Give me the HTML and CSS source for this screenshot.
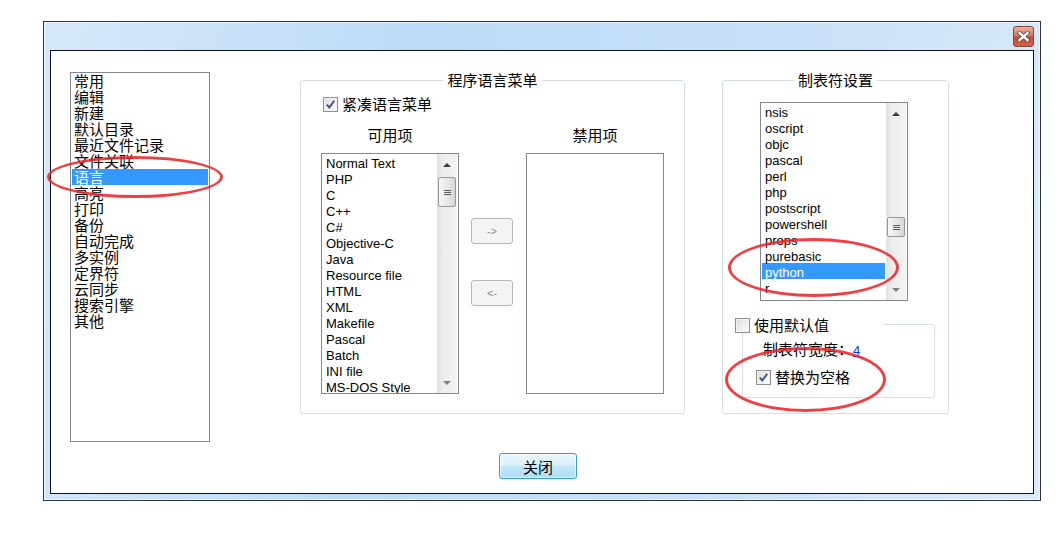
FILE: index.html
```html
<!DOCTYPE html>
<html lang="zh-CN">
<head>
  <meta charset="UTF-8" />
  <title>首选项</title>
  <link rel="stylesheet" href="styles.css">
</head>
<body>
  <div class="page">
    <div class="window">
      <div class="titlebar">
        <span class="close-btn">
          <svg width="13" height="11" viewBox="0 0 13 11">
            <path d="M2.5 2 L10.5 9 M10.5 2 L2.5 9" stroke="#4d4d4d" stroke-width="4.2" stroke-linecap="square" fill="none"/>
            <path d="M2.5 2 L10.5 9 M10.5 2 L2.5 9" stroke="#fff" stroke-width="2.4" stroke-linecap="square" fill="none"/>
          </svg>
        </span>
      </div>
      <div class="client">
        <div class="main">
          <ul class="listbox nav-list">
            <li>常用</li>
            <li>编辑</li>
            <li>新建</li>
            <li>默认目录</li>
            <li>最近文件记录</li>
            <li>文件关联</li>
            <li class="selected">语言</li>
            <li>高亮</li>
            <li>打印</li>
            <li>备份</li>
            <li>自动完成</li>
            <li>多实例</li>
            <li>定界符</li>
            <li>云同步</li>
            <li>搜索引擎</li>
            <li>其他</li>
          </ul>

          <fieldset class="group lang-group">
            <legend>程序语言菜单</legend>
            <label class="check">
              <span class="box"><svg width="11" height="11" viewBox="0 0 11 11"><path d="M1.8 5.6 L4.3 8.4 L9.3 1.8" stroke="#3d5089" stroke-width="1.9" fill="none"/></svg></span>
              紧凑语言菜单
            </label>
            <div class="lang-cols">
              <div class="col">
                <div class="col-title">可用项</div>
                <div class="listbox scroll-list avail">
                  <ul class="items">
                    <li>Normal Text</li>
                    <li>PHP</li>
                    <li>C</li>
                    <li>C++</li>
                    <li>C#</li>
                    <li>Objective-C</li>
                    <li>Java</li>
                    <li>Resource file</li>
                    <li>HTML</li>
                    <li>XML</li>
                    <li>Makefile</li>
                    <li>Pascal</li>
                    <li>Batch</li>
                    <li>INI file</li>
                    <li>MS-DOS Style</li>
                  </ul>
                  <div class="scrollbar">
                    <span class="arrow up"></span>
                    <span class="thumb"></span>
                    <span class="track"></span>
                    <span class="arrow down"></span>
                  </div>
                </div>
              </div>
              <div class="move-btns">
                <button>-&gt;</button>
                <button>&lt;-</button>
              </div>
              <div class="col">
                <div class="col-title">禁用项</div>
                <div class="listbox disabled-list"></div>
              </div>
            </div>
          </fieldset>

          <fieldset class="group tab-group">
            <legend>制表符设置</legend>
            <div class="listbox scroll-list tab-list">
              <ul class="items">
                <li>nsis</li>
                <li>oscript</li>
                <li>objc</li>
                <li>pascal</li>
                <li>perl</li>
                <li>php</li>
                <li>postscript</li>
                <li>powershell</li>
                <li>props</li>
                <li>purebasic</li>
                <li class="selected">python</li>
                <li>r</li>
                <li>ruby</li>
              </ul>
              <div class="scrollbar">
                <span class="arrow up"></span>
                <span class="thumb"></span>
                <span class="track"></span>
                <span class="arrow down"></span>
              </div>
            </div>
            <div class="sub-group">
              <label class="check sub-head"><span class="box"></span>使用默认值</label>
              <div class="tab-width">制表符宽度：<a href="#">4</a></div>
              <label class="check">
                <span class="box"><svg width="11" height="11" viewBox="0 0 11 11"><path d="M1.8 5.6 L4.3 8.4 L9.3 1.8" stroke="#3d5089" stroke-width="1.9" fill="none"/></svg></span>
                替换为空格
              </label>
            </div>
          </fieldset>
        </div>
        <div class="footer">
          <button class="close-dlg">关闭</button>
        </div>
      </div>
    </div>
  </div>

  <!-- annotations drawn over the screenshot -->
  <div class="mark mark-lang"></div>
  <div class="mark mark-python"></div>
  <div class="mark mark-space"></div>
</body>
</html>
```

FILE: styles.css
```css
body {
  margin: 0;
  background: #fff;
  font-family: "Noto Sans CJK SC", sans-serif;
  font-size: 15px;
  color: #000;
  position: relative;
  min-height: 542px;
}
.page {
  padding: 21px 0 0 43px;
}
.window {
  width: 998px;
  box-sizing: border-box;
  border: 1px solid #2f3740;
  padding: 0 6px 6px;
  background: linear-gradient(100deg, #d6e8fb 0%, #bddbf6 35%, #c8e0f8 70%, #dcebfb 100%);
  box-shadow: inset 0 0 0 1px rgba(255, 255, 255, 0.6);
}
.titlebar {
  height: 28px;
  display: flex;
  justify-content: flex-end;
  align-items: center;
}
.close-btn {
  width: 21px;
  height: 21px;
  box-sizing: border-box;
  border: 1px solid #80473c;
  border-radius: 3px;
  background: linear-gradient(#eeb09d, #d8745a 48%, #c54a30 52%, #d2654a);
  display: flex;
  align-items: center;
  justify-content: center;
}
.client {
  height: 444px;
  box-sizing: border-box;
  border: 1px solid #111;
  background: #fff;
  padding: 20px 0 0 19px;
}
.main {
  display: flex;
  align-items: flex-start;
}

/* list boxes */
.listbox {
  border: 1px solid #828790;
  background: #fff;
  box-sizing: border-box;
}
.nav-list {
  width: 140px;
  height: 370px;
  margin: 1px 0 0;
  padding: 0;
  list-style: none;
}
.nav-list li {
  height: 16px;
  line-height: 16px;
  margin: 0 1px;
  padding-left: 2px;
  white-space: nowrap;
}
.selected {
  background: #3399ff;
  color: #fff;
}
.scroll-list {
  display: flex;
}
.items {
  flex: 1;
  margin: 0;
  padding: 0;
  list-style: none;
  overflow: hidden;
  font-family: "Liberation Sans", sans-serif;
  font-size: 13px;
}
.items li {
  height: 16px;
  line-height: 19px;
  margin: 0 1px;
  padding-left: 3px;
  white-space: nowrap;
}
.scrollbar {
  width: 20px;
  margin-right: 1px;
  display: flex;
  flex-direction: column;
  background: linear-gradient(to right, #e2e2e2, #eeeeee 35%, #f3f3f3);
}
.arrow {
  height: 21px;
  flex: none;
  display: flex;
  align-items: center;
  justify-content: center;
}
.arrow::before {
  content: "";
  border-left: 4px solid transparent;
  border-right: 4px solid transparent;
}
.arrow.up::before {
  border-bottom: 4px solid #3a3a3a;
}
.arrow.down::before {
  border-top: 4px solid #7d7d7d;
}
.thumb {
  flex: none;
  margin: 0 1px;
  box-sizing: border-box;
  border: 1px solid #979797;
  border-radius: 2px;
  background: linear-gradient(to right, #f6f6f6, #e8e8e8 50%, #d6d6d6);
  display: flex;
  align-items: center;
  justify-content: center;
}
.thumb::after {
  content: "";
  width: 7px;
  height: 5px;
  background: repeating-linear-gradient(#5c5c5c 0 1px, transparent 1px 2px);
}
.track {
  flex: 1;
}

/* group boxes */
.group {
  margin: 0;
  padding: 0;
  border: 1px solid #d5dfe5;
  border-radius: 3px;
  box-sizing: border-box;
  min-width: 0;
}
.group > legend {
  margin: 0 auto;
  padding: 0 4px;
  line-height: 18px;
}
.lang-group {
  margin-left: 90px;
  width: 385px;
  height: 343px;
}
.tab-group {
  margin-left: 37px;
  width: 227px;
  height: 343px;
}

.check {
  display: flex;
  align-items: center;
  gap: 4px;
  height: 16px;
  line-height: 16px;
  white-space: nowrap;
}
.box {
  width: 15px;
  height: 15px;
  flex: none;
  box-sizing: border-box;
  border: 1px solid #8f8f8f;
  background: linear-gradient(135deg, #d9d9d9, #f4f4f4 65%, #fff);
  box-shadow: inset 0 0 0 1px #f2f2f2;
  display: flex;
  align-items: center;
  justify-content: center;
}
.lang-group .check {
  margin: 7px 0 0 22px;
}
.lang-cols {
  display: flex;
  margin: 14px 0 0 20px;
}
.col {
  width: 138px;
}
.col-title {
  height: 18px;
  line-height: 18px;
  text-align: center;
}
.avail,
.disabled-list {
  height: 241px;
  margin-top: 9px;
}
.avail .thumb {
  margin-top: 2px;
  height: 30px;
}
.move-btns {
  width: 42px;
  margin: 0 13px 0 12px;
  padding-top: 92px;
  display: flex;
  flex-direction: column;
  gap: 36px;
}
.move-btns button {
  width: 42px;
  height: 26px;
  padding: 0;
  border: 1px solid #b7b7b7;
  border-radius: 3px;
  background: #f4f4f4;
  color: #8a8a8a;
  font-family: "Liberation Sans", sans-serif;
  font-size: 11px;
}

.tab-list {
  width: 148px;
  height: 199px;
  margin: 13px 0 0 37px;
}
.tab-list .thumb {
  margin-top: 93px;
  height: 20px;
}
.sub-group {
  width: 193px;
  height: 74px;
  margin: 23px 0 0 19px;
  box-sizing: border-box;
  border: 1px solid #d5dfe5;
  border-radius: 3px;
}
/* the checkbox sits on the top edge and hides it, like a group caption */
.sub-head {
  width: 148px;
  margin: -8px 0 0 -8px;
  background: #fff;
}
.tab-width {
  margin: 8px 0 0 20px;
  line-height: 16px;
}
.tab-width a {
  color: #0033ee;
  font-family: "Liberation Sans", sans-serif;
  font-size: 13px;
}
.sub-group .check + .tab-width + .check {
  margin: 10px 0 0 13px;
}

.footer {
  margin-top: 11px;
  padding-left: 429px;
}
.close-dlg {
  width: 78px;
  height: 26px;
  padding: 0;
  border: 1px solid #2c9fdc;
  border-radius: 3px;
  background: linear-gradient(#eaf6fd, #dcf1fc 45%, #c2e7fc 52%, #afdcf6);
  box-shadow: inset 0 0 0 1px rgba(255, 255, 255, 0.7);
  font-family: "Noto Sans CJK SC", sans-serif;
  font-size: 15px;
  color: #000;
}

/* red hand-drawn rings */
.mark {
  position: absolute;
  box-sizing: border-box;
  border: 3px solid rgba(238, 36, 40, 0.88);
  border-radius: 50%;
}
.mark-lang {
  left: 47px;
  top: 156px;
  width: 176px;
  height: 42px;
}
.mark-python {
  left: 728px;
  top: 238px;
  width: 171px;
  height: 59px;
}
.mark-space {
  left: 725px;
  top: 347px;
  width: 161px;
  height: 65px;
}
```
